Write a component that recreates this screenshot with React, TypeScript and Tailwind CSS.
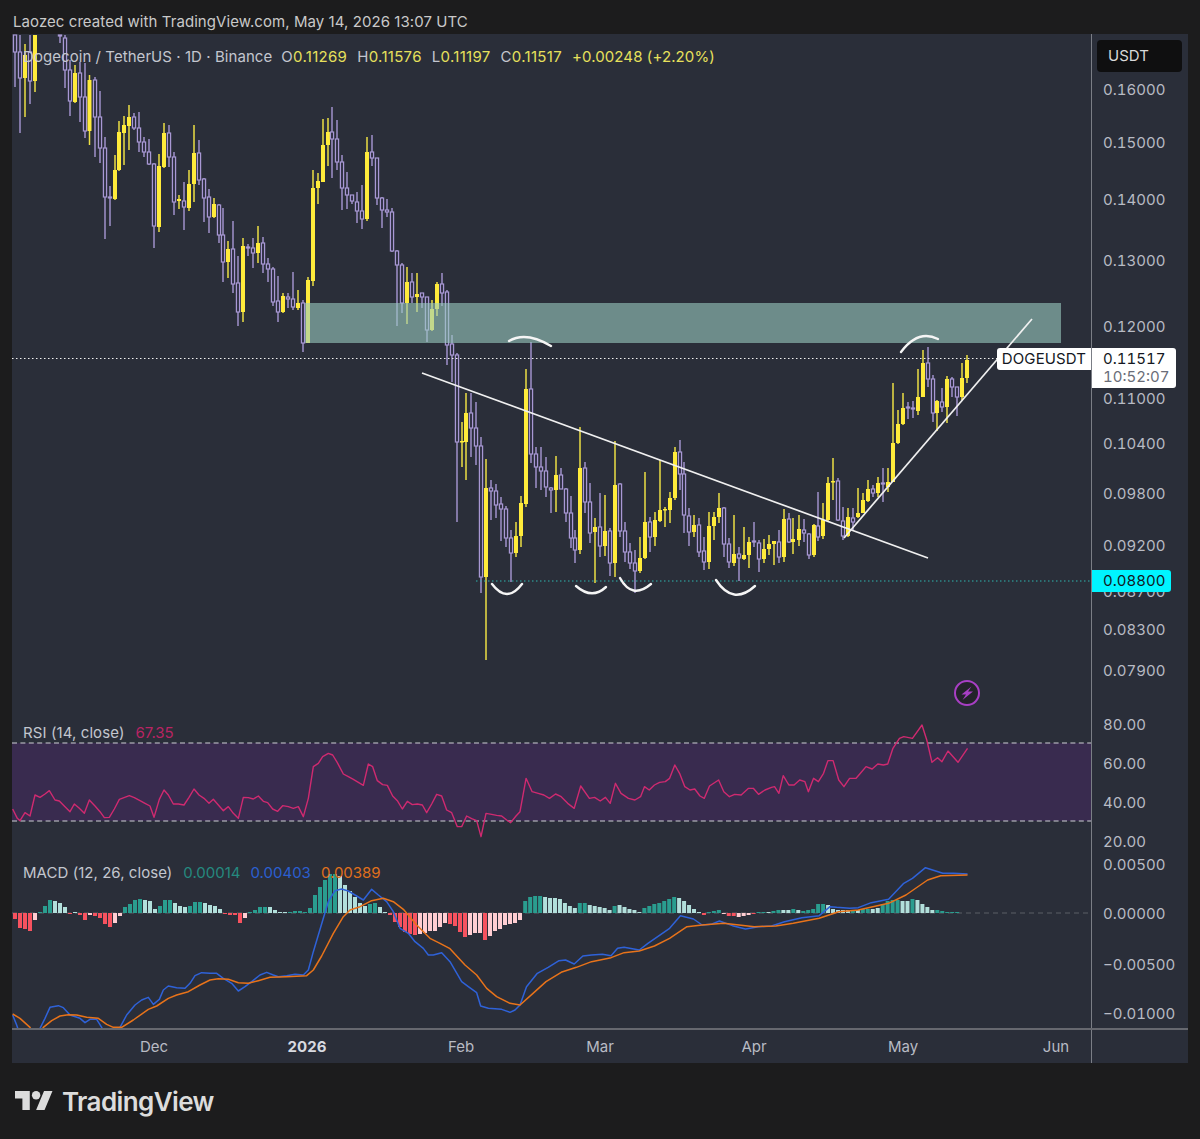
// x, high, body top, body bottom, low, up (page pixels, the svg viewBox keeps them)
type Candle = [number, number, number, number, number, number]

const candles: Candle[] = [
  [15, 35, 35, 52, 87, 0], [20, 35, 52, 78, 133, 0], [25, 44, 55, 78, 117, 1], [30, 35, 52, 81, 104, 0], [35, 35, 35, 81, 92, 1],
  [60, 35, 35, 35, 43, 0], [65, 35, 38, 70, 88, 0], [70, 60, 70, 101, 116, 0], [75, 65, 73, 102, 103, 1], [80, 62, 73, 97, 122, 0],
  [85, 63, 97, 131, 138, 0], [89.5, 75, 80, 131, 145, 1], [95, 77, 80, 117, 157, 0], [100, 91, 117, 148, 163, 0], [105, 137, 148, 197, 239, 0],
  [110, 186, 197, 198, 226, 0], [115, 155, 170, 199, 200, 1], [119, 121, 132, 170, 171, 1], [124, 116, 125, 133, 165, 1], [129, 105, 117, 126, 150, 1],
  [134, 113, 117, 128, 130, 0], [139, 112, 128, 142, 152, 0], [144, 137, 142, 152, 157, 0], [149, 139, 152, 164, 165, 0], [154, 163, 164, 226, 248, 0],
  [159, 154, 166, 227, 232, 1], [164, 123, 133, 167, 168, 1], [169, 125, 133, 157, 167, 0], [174, 152, 157, 202, 215, 0], [179, 195, 199, 201, 209, 1],
  [184, 182, 201, 207, 230, 0], [189, 170, 184, 208, 211, 1], [194, 125, 153, 184, 202, 1], [199, 140, 153, 180, 185, 0], [204, 178, 179, 198, 222, 0],
  [209, 189, 197, 217, 233, 0], [214, 198, 204, 217, 218, 1], [219, 204, 205, 235, 243, 0], [223, 208, 235, 262, 282, 0], [228, 241, 249, 262, 278, 1],
  [233, 221, 249, 284, 293, 0], [238, 256, 283, 312, 326, 0], [243, 238, 246, 312, 322, 1], [248, 244, 247, 248, 256, 0], [253, 238, 248, 253, 268, 0],
  [258, 226, 243, 253, 263, 1], [263, 237, 243, 264, 273, 0], [268, 258, 264, 269, 282, 0], [273, 267, 269, 302, 306, 0], [278, 276, 301, 312, 322, 0],
  [283, 293, 296, 312, 313, 1], [288, 293, 297, 299, 308, 0], [293, 272, 299, 307, 310, 0], [298, 290, 303, 308, 310, 1], [303, 300, 303, 343, 352, 0],
  [308, 277, 280, 343, 343, 1], [313, 170, 188, 281, 286, 1], [318, 173, 181, 188, 204, 1], [323, 119, 145, 182, 182, 1], [328, 118, 132, 145, 166, 1],
  [332, 107, 132, 139, 178, 0], [337, 120, 139, 162, 170, 0], [342, 155, 162, 188, 210, 0], [347, 172, 188, 195, 209, 0], [352, 195, 195, 201, 204, 0],
  [357, 192, 202, 211, 223, 0], [362, 185, 211, 219, 229, 0], [367, 137, 152, 219, 221, 1], [372, 135, 152, 158, 166, 0], [377, 158, 158, 198, 205, 0],
  [382, 197, 198, 210, 228, 0], [387, 199, 210, 212, 217, 0], [392, 208, 212, 251, 252, 0], [397, 250, 251, 265, 326, 0], [402, 263, 265, 303, 313, 0],
  [407, 267, 282, 303, 324, 1], [412, 273, 282, 297, 303, 0], [417, 273, 294, 297, 312, 1], [422, 293, 293, 297, 308, 0], [427, 297, 297, 330, 342, 0],
  [432, 300, 309, 330, 331, 1], [437, 282, 284, 309, 316, 1], [442, 273, 284, 293, 306, 0], [447, 290, 292, 345, 365, 0], [452, 335, 344, 355, 382, 0],
  [457, 353, 355, 442, 522, 0], [462, 422, 441, 442, 467, 1], [466, 393, 413, 442, 480, 1], [471, 393, 413, 428, 457, 0], [476, 402, 428, 446, 465, 0],
  [481, 437, 446, 577, 593, 0], [486, 459, 488, 577, 660, 1], [491, 480, 488, 491, 520, 0], [496, 484, 491, 505, 518, 0], [501, 497, 504, 509, 541, 0],
  [506, 506, 509, 538, 547, 0], [511, 530, 538, 553, 582, 0], [516, 522, 536, 553, 557, 1], [521, 496, 503, 536, 547, 1], [526, 369, 389, 504, 507, 1],
  [531, 342, 389, 454, 463, 0], [536, 447, 454, 467, 488, 0], [541, 447, 467, 471, 490, 0], [546, 457, 471, 487, 497, 0], [551, 487, 488, 490, 513, 0],
  [556, 456, 475, 490, 512, 1], [561, 468, 475, 489, 489, 0], [566, 488, 489, 513, 522, 0], [571, 496, 513, 538, 548, 0], [575, 530, 538, 550, 563, 0],
  [580, 427, 468, 550, 554, 1], [585, 462, 468, 502, 513, 0], [590, 483, 502, 533, 543, 0], [595, 518, 527, 532, 583, 1], [600, 493, 527, 546, 557, 0],
  [605, 495, 531, 546, 556, 1], [610, 528, 531, 563, 576, 0], [615, 441, 485, 563, 577, 1], [620, 483, 484, 531, 537, 0], [625, 522, 531, 552, 562, 0],
  [630, 543, 552, 563, 569, 0], [635, 550, 563, 571, 593, 0], [640, 537, 558, 571, 573, 1], [645, 472, 522, 558, 559, 1], [650, 517, 522, 537, 552, 0],
  [655, 512, 520, 537, 546, 1], [660, 460, 510, 521, 522, 1], [665, 507, 509, 510, 527, 1], [670, 492, 498, 510, 523, 1], [675, 447, 452, 498, 500, 1],
  [680, 440, 452, 474, 490, 0], [684, 462, 474, 515, 533, 0], [689, 508, 516, 532, 546, 0], [694, 515, 525, 532, 537, 1], [699, 518, 525, 552, 557, 0],
  [704, 537, 551, 562, 570, 0], [709, 512, 526, 562, 569, 1], [714, 512, 517, 526, 540, 1], [719, 493, 508, 517, 523, 1], [724, 507, 508, 544, 557, 0],
  [729, 538, 544, 562, 568, 0], [734, 515, 554, 563, 566, 1], [739, 547, 554, 558, 581, 0], [744, 527, 555, 559, 560, 1], [749, 537, 542, 555, 568, 1],
  [754, 522, 541, 542, 547, 0], [759, 540, 543, 559, 572, 0], [764, 539, 549, 559, 563, 1], [769, 535, 544, 549, 555, 1], [774, 541, 541, 544, 565, 1],
  [779, 530, 542, 557, 563, 0], [784, 509, 519, 557, 562, 1], [789, 513, 519, 542, 543, 0], [793, 518, 539, 542, 554, 1], [799, 515, 529, 540, 546, 1],
  [804, 519, 530, 533, 542, 0], [809, 533, 534, 555, 559, 0], [814, 524, 525, 555, 557, 1], [818, 492, 526, 537, 541, 0], [823, 503, 520, 536, 539, 1],
  [828, 477, 483, 520, 521, 1], [833, 458, 481, 482, 500, 1], [838, 478, 481, 520, 521, 0], [843, 507, 521, 536, 540, 0], [848, 508, 517, 536, 537, 1],
  [853, 508, 518, 522, 531, 0], [858, 488, 513, 517, 518, 1], [863, 493, 500, 513, 513, 1], [868, 480, 489, 501, 502, 1], [873, 485, 489, 493, 497, 0],
  [878, 477, 483, 493, 497, 1], [883, 468, 483, 484, 502, 0], [888, 468, 482, 487, 492, 1], [893, 383, 443, 482, 482, 1], [898, 410, 424, 443, 444, 1],
  [903, 393, 408, 424, 425, 1], [908, 402, 407, 408, 419, 0], [913, 401, 408, 409, 418, 0], [918, 369, 397, 411, 415, 1], [923, 350, 363, 397, 397, 1],
  [928, 347, 363, 379, 387, 0], [933, 375, 379, 413, 422, 0], [937, 400, 401, 413, 431, 1], [942, 388, 402, 407, 412, 0], [947, 376, 379, 407, 423, 1],
  [952, 377, 379, 387, 397, 0], [957, 387, 387, 397, 416, 0], [962, 363, 378, 397, 400, 1], [967, 355, 360, 378, 383, 1],
]

// pane lines: read off in two strips, left one at 3x, right one at 2.306x
const left = (p: number[]) => { const out: string[] = []; for (let i = 0; i < p.length; i += 2) out.push(`${p[i] / 3},${710 + p[i + 1] / 3}`); return out }
const right = (p: number[]) => { const out: string[] = []; for (let i = 0; i < p.length; i += 2) out.push(`${520 + p[i] / 2.306},${710 + p[i + 1] / 3}`); return out }

const rsi = [
  ...left([38,297,52,325,60,332,75,308,90,318,105,255,120,262,135,252,148,242,165,270,178,273,195,290,210,305,223,282,238,295,253,310,268,270,285,288,300,305,313,323,328,322,343,297,358,268,372,263,388,257,403,263,420,272,435,280,450,288,462,322,478,268,492,240,505,255,520,282,535,282,552,285,567,262,582,237,597,255,612,265,627,280,640,268,655,285,670,302,685,290,700,310,715,325,730,262,745,263,760,267,775,258,790,274,803,278,818,297,833,304,848,287,865,290,880,295,895,290,910,320,925,265,940,170,955,160,968,140,985,130,998,135,1012,158,1030,192,1045,200,1060,208,1075,217,1090,226,1105,162,1118,170,1132,212,1148,224,1162,226,1178,258,1192,272,1207,297,1222,274,1237,284,1252,282,1267,285,1280,308,1295,282,1310,253,1325,258,1340,300,1355,308,1372,350,1385,350,1400,318,1415,326,1430,332,1443,380,1458,310,1475,313,1490,316,1505,318,1520,330,1532,338,1548,318]),
  ...right([0,305,14,205,28,245,42,250,55,255,68,265,82,252,95,260,110,280,125,295,140,228,160,265,172,262,185,273,197,262,208,280,220,220,233,250,250,265,265,270,278,260,287,230,298,240,310,225,322,217,335,215,345,205,357,165,368,190,380,230,392,240,403,237,415,258,425,265,437,228,458,210,470,245,483,260,495,253,510,255,527,235,538,235,550,253,565,240,580,232,587,230,597,250,607,197,620,225,632,225,645,210,657,215,665,245,677,205,688,215,700,190,710,152,722,152,735,210,747,230,760,205,775,205,785,190,798,170,812,177,825,162,838,165,848,162,860,115,875,85,885,80,905,85,927,45,938,90,950,157,963,143,973,155,987,123,1010,157,1032,115]),
].join(" ")

const macd = [
  ...left([38,915,50,945,60,975,110,975,120,955,135,925,150,892,175,887,190,893,210,915,240,925,255,938,270,928,290,928,305,952,312,975,352,975,360,952,380,915,405,885,425,870,445,862,460,883,478,868,490,840,505,828,530,833,555,835,570,820,585,797,605,788,630,790,650,790,670,805,695,820,715,843,735,830,755,815,780,795,800,787,820,795,835,800,860,797,885,793,910,795,925,780,940,725,955,675,970,625,985,575,1005,542,1025,537,1045,543,1070,558,1090,570,1115,538,1135,555,1160,575,1180,605,1200,655,1225,670,1245,695,1270,715,1285,735,1300,735,1325,728,1350,755,1385,815,1405,830,1430,848,1442,888,1465,895,1505,898,1530,907,1545,900]),
  ...right([0,885,15,830,40,790,65,772,90,752,105,750,125,762,145,738,165,735,190,733,210,737,225,715,240,712,275,720,295,700,345,655,370,617,400,627,420,645,440,643,460,633,490,647,520,657,550,650,580,648,610,635,650,623,690,617,715,590,730,592,760,595,780,593,810,578,850,568,885,520,905,505,935,473,975,490,1000,490,1032,492]),
].join(" ")

const signal = [
  ...left([38,912,60,925,90,952,100,975,120,975,130,952,155,932,180,918,205,914,230,915,260,922,295,925,320,943,340,952,365,952,400,930,445,898,470,888,505,865,530,855,565,845,600,825,630,810,655,806,685,808,715,818,745,820,775,812,810,802,860,800,920,797,940,780,965,738,1000,670,1030,620,1050,600,1080,590,1115,572,1150,565,1180,575,1210,598,1250,645,1290,685,1320,700,1350,716,1395,765,1430,795,1460,835,1490,860,1530,880]),
  ...right([0,885,30,850,60,815,95,787,130,772,165,755,210,743,240,728,275,723,310,708,345,685,385,650,420,645,470,640,510,646,540,650,590,648,630,640,690,625,735,605,780,600,850,580,890,555,940,510,970,497,1032,495]),
].join(" ")

// histogram, [height, light] from x=15 at 5px, then from x=525 at 4.965px
const histA: [number, number][] = [
  [-6,0],[-15,0],[-16,0],[-18,0],[-7,1],[1,0],[7,0],[13,0],[12,1],[10,1],[6,1],[-1,0],[1,1],[-2,0],[-7,0],[-2,1],[-3,0],[-5,0],[-11,0],[-14,0],[-10,1],[-3,1],
  [6,0],[9,0],[13,0],[14,0],[13,1],[12,1],[4,1],[7,0],[13,0],[13,0],[10,1],[7,1],[6,1],[7,0],[11,0],[11,0],[10,1],[8,1],[7,1],[4,1],
  [-1,0],[-2,0],[-2,0],[-10,0],[-5,1],[1,0],[3,0],[6,0],[6,0],[6,1],[3,1],[1,1],[1,1],[1,0],[2,0],[2,0],[1,0],[5,0],[18,0],[26,0],[33,0],[39,0],[39,0],[37,1],[28,1],[22,1],[16,1],[10,1],[7,1],[9,0],[10,0],[6,1],[1,1],
  [-2,0],[-9,0],[-14,0],[-19,0],[-21,0],[-22,0],[-21,1],[-20,1],[-18,1],[-18,1],[-14,1],[-10,1],[-11,0],[-13,0],[-19,0],[-24,0],[-22,1],[-20,1],[-20,1],[-27,0],[-23,1],[-18,1],[-16,1],[-12,1],[-11,1],[-10,1],[-7,1],
]
const histB: [number, number][] = [
  [12,0],[16,0],[17,0],[17,0],[16,1],[15,1],[15,1],[14,1],[10,1],[7,1],[5,1],[10,0],[10,0],[8,1],[7,1],[6,1],[5,1],[3,1],[7,0],[8,1],[6,1],[4,1],[3,1],[1,1],[5,0],[7,0],[9,0],[10,0],[12,0],[14,0],[16,0],[15,1],[12,1],[8,1],[4,1],[1,1],
  [-2,0],[1,0],[2,0],[3,0],[-1,1],[-3,0],[-3,0],[-4,1],[-3,1],[-2,1],[-1,0],[1,0],[1,0],[1,1],[2,0],[3,0],[3,1],[3,1],[4,0],[3,1],[2,0],[3,0],[4,0],[9,0],[9,0],[8,1],[4,1],[3,1],[3,1],[3,1],[3,0],[3,1],[4,0],[4,0],[4,1],[5,1],[9,0],[12,0],[13,0],[13,0],[12,1],[12,1],[14,0],[13,1],[9,1],[6,1],[3,1],[3,0],[2,0],[1,0],[1,0],[1,0],
]
const bars = [
  ...histA.map(([h, l], i) => ({ x: 15 + i * 5, h, l })),
  ...histB.map(([h, l], i) => ({ x: 525.2 + i * 4.965, h, l })),
]
const barColor = (h: number, l: number) => (h >= 0 ? (l ? "#b2dfdb" : "#2a9d8f") : l ? "#ffcdd2" : "#f7525f")

const priceTicks: [string, number][] = [
  ["0.16000", 89], ["0.15000", 142], ["0.14000", 199], ["0.13000", 260], ["0.12000", 326], ["0.11000", 398], ["0.10400", 443], ["0.09800", 493], ["0.09200", 545], ["0.08700", 591], ["0.08300", 629], ["0.07900", 670],
  ["80.00", 724], ["60.00", 763], ["40.00", 802], ["20.00", 841],
  ["0.00500", 864], ["0.00000", 913], ["−0.00500", 964], ["−0.01000", 1013],
]
const timeTicks: [string, number][] = [["Dec", 154], ["2026", 307], ["Feb", 461], ["Mar", 600], ["Apr", 754], ["May", 903], ["Jun", 1056]]

const arcs = [
  "M509 341 Q526 331 551 346",
  "M901 352 Q918 329 938 339",
  "M492 584 Q507 604 522 584",
  "M576 586 Q592 600 606 587",
  "M620 578 Q632 600 651 584",
  "M716 580 Q733 606 755 586",
]

function ChartDrawing() {
  return (
    <svg viewBox="12 34 1079 994" className="absolute inset-0 h-[994px] w-[1079px]">
      {/* rsi band */}
      <rect x="12" y="743" width="1079" height="78" fill="#392b4f" />
      <line x1="12" y1="743" x2="1091" y2="743" stroke="#cfd0d6" strokeDasharray="5 3.4" />
      <line x1="12" y1="821" x2="1091" y2="821" stroke="#cfd0d6" strokeDasharray="5 3.4" />
      <polyline points={rsi} fill="none" stroke="#cf2a70" strokeWidth="1.4" strokeLinejoin="round" />

      {/* macd */}
      <line x1="12" y1="913" x2="1091" y2="913" stroke="#5b5e67" strokeDasharray="5 4" />
      {bars.map((b, i) => (
        <rect key={i} x={b.x - 2} y={b.h >= 0 ? 913 - b.h : 913} width="4" height={Math.abs(b.h)} fill={barColor(b.h, b.l)} />
      ))}
      <polyline points={macd} fill="none" stroke="#2f62d8" strokeWidth="1.5" strokeLinejoin="round" />
      <polyline points={signal} fill="none" stroke="#e8731a" strokeWidth="1.5" strokeLinejoin="round" />

      {/* candles */}
      {candles.map(([x, hi, top, bot, lo, up]) =>
        up ? (
          <g key={x}>
            <line x1={x} x2={x} y1={hi} y2={lo} stroke="#ecdf45" strokeWidth="1.5" />
            <rect x={x - 2} y={top} width="4" height={Math.max(bot - top, 1.5)} fill="#ffeb3b" />
          </g>
        ) : (
          <g key={x} stroke="#a898d4" fill="none">
            <line x1={x} x2={x} y1={hi} y2={top} strokeWidth="1.4" />
            <line x1={x} x2={x} y1={bot} y2={lo} strokeWidth="1.4" />
            <rect x={x - 1.6} y={top} width="3.2" height={Math.max(bot - top, 1)} strokeWidth="1.2" fill="#343449" />
          </g>
        ),
      )}

      {/* resistance zone */}
      <rect x="305" y="303" width="756" height="40" fill="rgb(155,204,194)" fillOpacity="0.6" />

      {/* price lines */}
      <line x1="12" y1="358.5" x2="1091" y2="358.5" stroke="#f2f2f2" strokeDasharray="1.5 2.5" />
      <line x1="476" y1="581" x2="1091" y2="581" stroke="#2fb5b0" strokeDasharray="1.5 2.5" />

      {/* drawings */}
      <line x1="422" y1="373" x2="928" y2="558" stroke="#f0f0f0" strokeWidth="1.7" />
      <line x1="844" y1="538" x2="1032" y2="319" stroke="#f0f0f0" strokeWidth="1.7" />
      {arcs.map((d) => (
        <path key={d} d={d} fill="none" stroke="#f5f5f5" strokeWidth="2.4" strokeLinecap="round" />
      ))}

      {/* alert badge */}
      <circle cx="967" cy="693" r="12" fill="#232329" stroke="#a83fc4" strokeWidth="2" />
      <path d="M971.5 686.5 L961.5 694.5 L966 694.5 L962.5 700 L973 691.5 L968 691.5 Z" fill="#a83fc4" />
    </svg>
  )
}

export default function App() {
  return (
    <div className="flex h-[1139px] w-[1200px] flex-col bg-[#1c1c1d] font-['Inter',sans-serif] text-[#b8bbc4]">
      <div className="flex h-[34px] items-end pb-[3px] pl-[13px] text-[15px] leading-[18px] tracking-[0.07px] text-[#c9c9c9]">
        Laozec created with TradingView.com, May 14, 2026 13:07 UTC
      </div>

      <div className="ml-[12px] flex h-[1029px] w-[1176px] flex-col bg-[#2a2e39]">
        <div className="flex h-[994px]">
          {/* panes */}
          <div className="relative w-[1079px] shrink-0">
            <ChartDrawing />

            <div className="absolute left-[11px] top-[14px] flex gap-[10px] text-[15px] leading-[18px] text-[#c3c6cf]">
              <span className="mr-[-1px] tracking-[0.06px]">Dogecoin / TetherUS · 1D · Binance</span>
              <span className="tracking-[0.3px]">O<span className="text-[#e7e05c]">0.11269</span></span>
              <span className="tracking-[0.3px]">H<span className="text-[#e7e05c]">0.11576</span></span>
              <span className="tracking-[0.3px]">L<span className="text-[#e7e05c]">0.11197</span></span>
              <span className="tracking-[0.3px]">C<span className="text-[#e7e05c]">0.11517</span></span>
              <span className="tracking-[0.1px] text-[#e7e05c]">+0.00248 (+2.20%)</span>
            </div>

            <div className="absolute left-[11px] top-[690px] flex gap-[10px] text-[15px] leading-[18px]">
              <span className="mr-[1px] tracking-[0.1px] text-[#c3c6cf]">RSI (14, close)</span>
              <span className="text-[#b92463]">67.35</span>
            </div>

            <div className="absolute left-[11px] top-[830px] flex gap-[10px] text-[15px] leading-[18px]">
              <span className="mr-[1px] tracking-[0.05px] text-[#c3c6cf]">MACD (12, 26, close)</span>
              <span className="text-[#25897f]">0.00014</span>
              <span className="text-[#2a5fd0]">0.00403</span>
              <span className="text-[#e0701c]">0.00389</span>
            </div>

            <div className="absolute right-0 top-[314px] flex h-[22px] items-center rounded-l-[3px] bg-white pl-[5px] pr-[5px] text-[15px] tracking-[0.1px] text-[#131722]">
              DOGEUSDT
            </div>
          </div>

          {/* price axis */}
          <div className="relative flex-1 border-l border-[#7b7e86] tabular-nums">
            {priceTicks.map(([label, y]) => (
              <span key={label} className="absolute left-[11px] -translate-y-1/2 text-[15px] leading-[18px]" style={{ top: y - 33 }}>
                {label}
              </span>
            ))}

            <div className="absolute left-[5px] top-[6px] flex h-[32px] w-[85px] items-center rounded-[4px] bg-[#0f0f10] pl-[11px] text-[15px] text-[#d9d9d9]">
              USDT
            </div>
            <div className="absolute left-0 top-[314px] flex h-[40px] w-[84px] flex-col rounded-r-[3px] bg-white pl-[11px] pt-[2px] text-[15px] leading-[18px]">
              <span className="text-[#131722]">0.11517</span>
              <span className="text-[#6a6d78]">10:52:07</span>
            </div>
            <div className="absolute left-0 top-[536px] flex h-[22px] w-[79px] items-center rounded-r-[3px] bg-[#00f5ff] pl-[11px] text-[15px] text-[#131722]">
              0.08800
            </div>
          </div>
        </div>

        {/* time axis */}
        <div className="flex h-[35px] border-t-2 border-[#66686f]">
          <div className="relative w-[1079px] shrink-0">
            {timeTicks.map(([label, x]) => (
              <span
                key={label}
                className={
                  label === "2026"
                    ? "absolute top-[8px] -translate-x-1/2 text-[15px] font-bold leading-[18px] text-[#d8dae0]"
                    : "absolute top-[8px] -translate-x-1/2 text-[15px] leading-[18px]"
                }
                style={{ left: x - 12 }}
              >
                {label}
              </span>
            ))}
          </div>
          <div className="flex-1 border-l border-[#7b7e86]" />
        </div>
      </div>

      {/* footer logo */}
      <div className="flex flex-1 items-start gap-[9px] pl-[15px] pt-[23px]">
        <svg viewBox="0 4 36 18" className="mt-[5px] h-[19px] w-[38px]" fill="#dcdcdc">
          <path d="M14 22H7V11H0V4h14v18zM28 22h-8l7.5-18h8L28 22z" />
          <circle cx="20" cy="8" r="4" />
        </svg>
        <span className="text-[26px] font-semibold leading-[32px] tracking-[-0.6px] text-[#dcdcdc]">TradingView</span>
      </div>
    </div>
  )
}
